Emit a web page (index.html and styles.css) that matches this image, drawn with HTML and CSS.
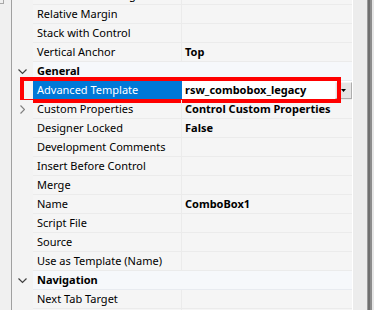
FILE: index.html
```html
<!DOCTYPE html>
<html>
<head>
<meta charset="utf-8">
<link rel="stylesheet" href="styles.css">
</head>
<body>
<div class="window">
  <div class="side"><div class="corner"></div></div>
  <div class="grid">
    <div class="rows">
      <div class="row"><div class="exp"></div><div class="name">Horizontal Docking</div><div class="value"></div></div>
      <div class="row"><div class="exp"></div><div class="name">Relative Margin</div><div class="value"></div></div>
      <div class="row"><div class="exp"></div><div class="name">Stack with Control</div><div class="value"></div></div>
      <div class="row"><div class="exp"></div><div class="name">Vertical Anchor</div><div class="value">Top</div></div>
      <div class="row cat"><div class="exp"><svg width="9" height="6" viewBox="0 0 9 6"><polyline points="0.5,0.5 4.5,4.5 8.5,0.5" fill="none" stroke="#404040" stroke-width="1.2"/></svg></div><div class="name">General</div></div>
      <div class="row selected">
        <div class="exp"></div><div class="name">Advanced Template</div>
        <div class="value"><span class="val-text">rsw_combobox_legacy</span><span class="drop"><svg width="5" height="3" viewBox="0 0 5 3"><polygon points="0,0 5,0 2.5,3" fill="#000"/></svg></span></div>
        <div class="highlight"></div>
      </div>
      <div class="row"><div class="exp"><svg width="5" height="9" viewBox="0 0 5 9"><polyline points="0.5,0.5 4.5,4.5 0.5,8.5" fill="none" stroke="#808080" stroke-width="1.2"/></svg></div><div class="name">Custom Properties</div><div class="value">Control Custom Properties</div></div>
      <div class="row"><div class="exp"></div><div class="name">Designer Locked</div><div class="value">False</div></div>
      <div class="row"><div class="exp"></div><div class="name">Development Comments</div><div class="value"></div></div>
      <div class="row"><div class="exp"></div><div class="name">Insert Before Control</div><div class="value"></div></div>
      <div class="row"><div class="exp"></div><div class="name">Merge</div><div class="value"></div></div>
      <div class="row"><div class="exp"></div><div class="name">Name</div><div class="value">ComboBox1</div></div>
      <div class="row"><div class="exp"></div><div class="name">Script File</div><div class="value"></div></div>
      <div class="row"><div class="exp"></div><div class="name">Source</div><div class="value"></div></div>
      <div class="row"><div class="exp"></div><div class="name">Use as Template (Name)</div><div class="value"></div></div>
      <div class="row cat"><div class="exp"><svg width="9" height="6" viewBox="0 0 9 6"><polyline points="0.5,0.5 4.5,4.5 8.5,0.5" fill="none" stroke="#404040" stroke-width="1.2"/></svg></div><div class="name">Navigation</div></div>
      <div class="row"><div class="exp"></div><div class="name">Next Tab Target</div><div class="value"></div></div>
      <div class="row"><div class="exp"></div><div class="name"></div><div class="value"></div></div>
    </div>
  </div>
  <div class="scroll"></div>
  <div class="edge"></div>
</div>
</body>
</html>
```

FILE: styles.css
```css
html, body {
  margin: 0;
  padding: 0;
  background: #f0f0f0;
}
.window {
  display: flex;
  width: 374px;
  height: 310px;
  overflow: hidden;
  font-family: "Noto Sans", "DejaVu Sans", sans-serif;
  font-size: 11px;
  color: #000;
}
.side {
  width: 11px;
  flex: none;
  background: #f0f0f0;
  border-right: 1px solid #a0a0a0;
}
.corner {
  width: 3px;
  height: 3px;
  border-right: 1px solid #a8a8a8;
  border-bottom: 1px solid #a8a8a8;
}
.grid {
  width: 340px;
  flex: none;
  background: #f5f5f5;
  border-right: 1px solid #ffffff;
  overflow: hidden;
}
.rows {
  margin-top: -14px;
}
.row {
  position: relative;
  display: grid;
  grid-template-columns: 21px 148px 1fr;
  height: 19px;
}
.exp {
  display: flex;
  align-items: center;
  justify-content: center;
  background: #f3f3f3;
}
.name {
  padding-left: 4px;
  line-height: 18px;
  border-bottom: 1px solid #ebebeb;
  white-space: nowrap;
  overflow: hidden;
}
.value {
  padding-left: 3px;
  line-height: 18px;
  font-weight: bold;
  border-left: 1px solid #ebebeb;
  border-bottom: 1px solid #ebebeb;
  white-space: nowrap;
  overflow: hidden;
  display: flex;
  align-items: center;
}
.cat {
  grid-template-columns: 21px 1fr;
}
.cat .name {
  font-weight: bold;
  background: #f6f8fb;
  border-bottom: 1px solid #e8ebf0;
}
.selected .name {
  background: #0078d7;
  color: #fff;
}
.selected .value {
  background: #fff;
  border-left: 1px solid #0078d7;
  padding-right: 0;
}
.val-text {
  flex: 1;
}
.drop {
  width: 15px;
  height: 15px;
  background: #e5e5e5;
  border: 1px solid #adadad;
  border-top-color: #f4f4f4;
  border-left-color: #f4f4f4;
  display: flex;
  align-items: center;
  justify-content: center;
  flex: none;
}
.highlight {
  position: absolute;
  left: 8px;
  top: -4px;
  width: 313px;
  height: 18px;
  border: 4px solid #ff0000;
}
.scroll {
  width: 14px;
  flex: none;
  background: #ececec;
}
.edge {
  width: 7px;
  flex: none;
  background: linear-gradient(to right, #9a9a9a 0, #9a9a9a 1px, #6f6f6f 1px, #6f6f6f 3px, #8c8c8c 3px, #8c8c8c 5px, #e6e6e6 5px);
}
```
